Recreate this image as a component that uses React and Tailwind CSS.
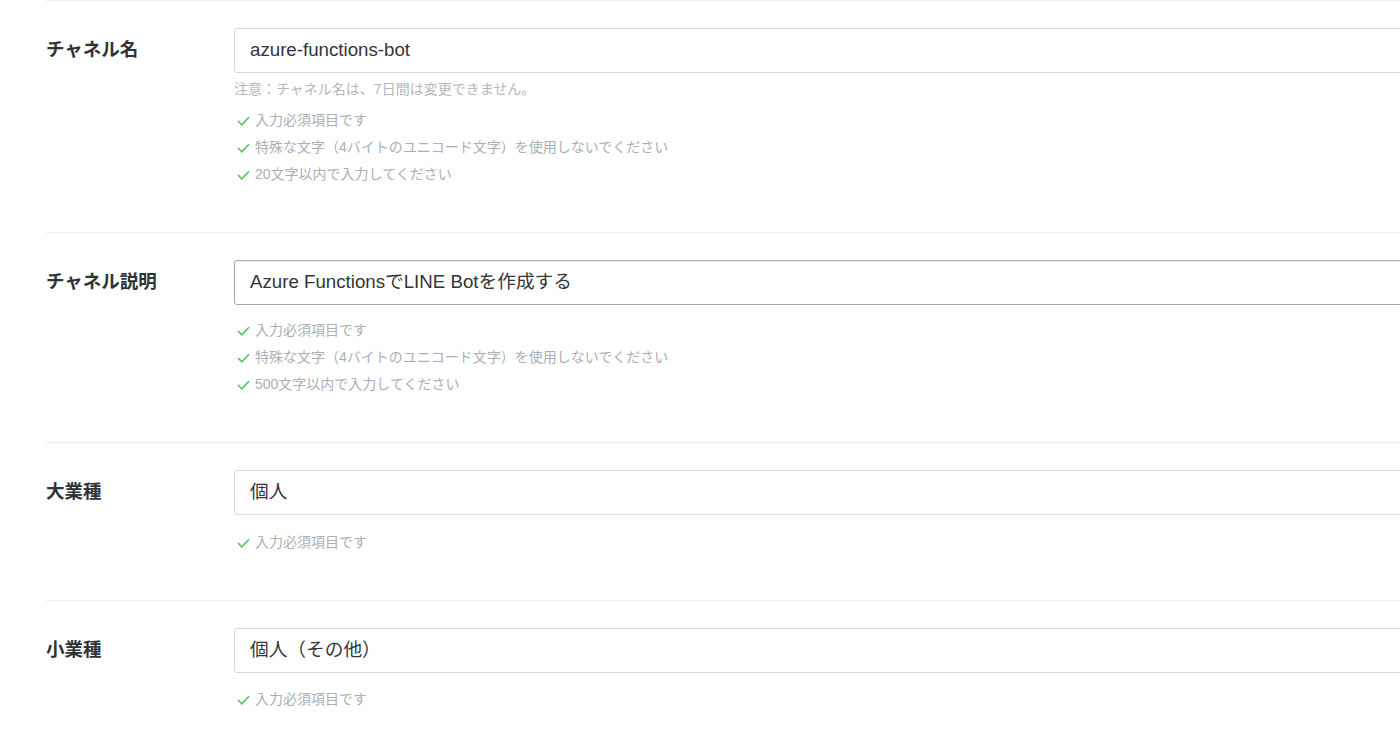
import React from 'react';

const font = { fontFamily: '"Liberation Sans", "Noto Sans CJK JP", sans-serif' };

const CheckIcon = () => (
  <svg width="13" height="10" viewBox="0 0 13 10" className="mr-[5px] shrink-0">
    <path d="M1 5l3.8 3.8L12 1.3" fill="none" stroke="#4cc764" strokeWidth="1.6" />
  </svg>
);

const fields = [
  {
    label: 'チャネル名',
    value: 'azure-functions-bot',
    note: '注意：チャネル名は、7日間は変更できません。',
    gap: 'mt-[8px]',
    rules: ['入力必須項目です', '特殊な文字（4バイトのユニコード文字）を使用しないでください', '20文字以内で入力してください'],
  },
  {
    label: 'チャネル説明',
    value: 'Azure FunctionsでLINE Botを作成する',
    focused: true,
    gap: 'mt-[12px]',
    rules: ['入力必須項目です', '特殊な文字（4バイトのユニコード文字）を使用しないでください', '500文字以内で入力してください'],
  },
  { label: '大業種', value: '個人', gap: 'mt-[14px]', rules: ['入力必須項目です'] },
  { label: '小業種', value: '個人（その他）', gap: 'mt-[13px]', rules: ['入力必須項目です'] },
];

const FieldRow = ({ field }) => (
  <div className="flex border-t border-[#eceef0] pt-[27px] pb-[44px]">
    <div className="w-[188px] shrink-0 pt-[12px] text-[18.5px] leading-[20px] font-bold text-[#2f3337]">
      {field.label}
    </div>
    <div className="flex-1">
      <div
        className={
          field.focused
            ? 'w-[1300px] h-[45px] rounded-[3px] border border-[#a3a8ae] shadow-[inset_0_1px_1px_rgba(0,0,0,0.06)] flex items-center px-[15px] text-[18.7px] text-[#333538]'
            : 'w-[1300px] h-[45px] rounded-[3px] border border-[#d6d9dd] flex items-center px-[15px] text-[18.7px] text-[#333538]'
        }
      >
        {field.value}
      </div>
      {field.note && (
        <div className="mt-[6px] text-[14px] leading-[20px] text-[#b3b7bc]">{field.note}</div>
      )}
      <ul className={field.gap}>
        {field.rules.map((r, i) => (
          <li key={i} className="flex items-center h-[27px] pl-[3px] text-[14px] text-[#aaafb4]">
            <CheckIcon />
            {r}
          </li>
        ))}
      </ul>
    </div>
  </div>
);

export default function App() {
  return (
    <div className="w-[1400px] h-[744px] overflow-hidden bg-white" style={font}>
      <div className="pl-[46px]">
        {fields.map((f, i) => (
          <FieldRow key={i} field={f} />
        ))}
      </div>
    </div>
  );
}
